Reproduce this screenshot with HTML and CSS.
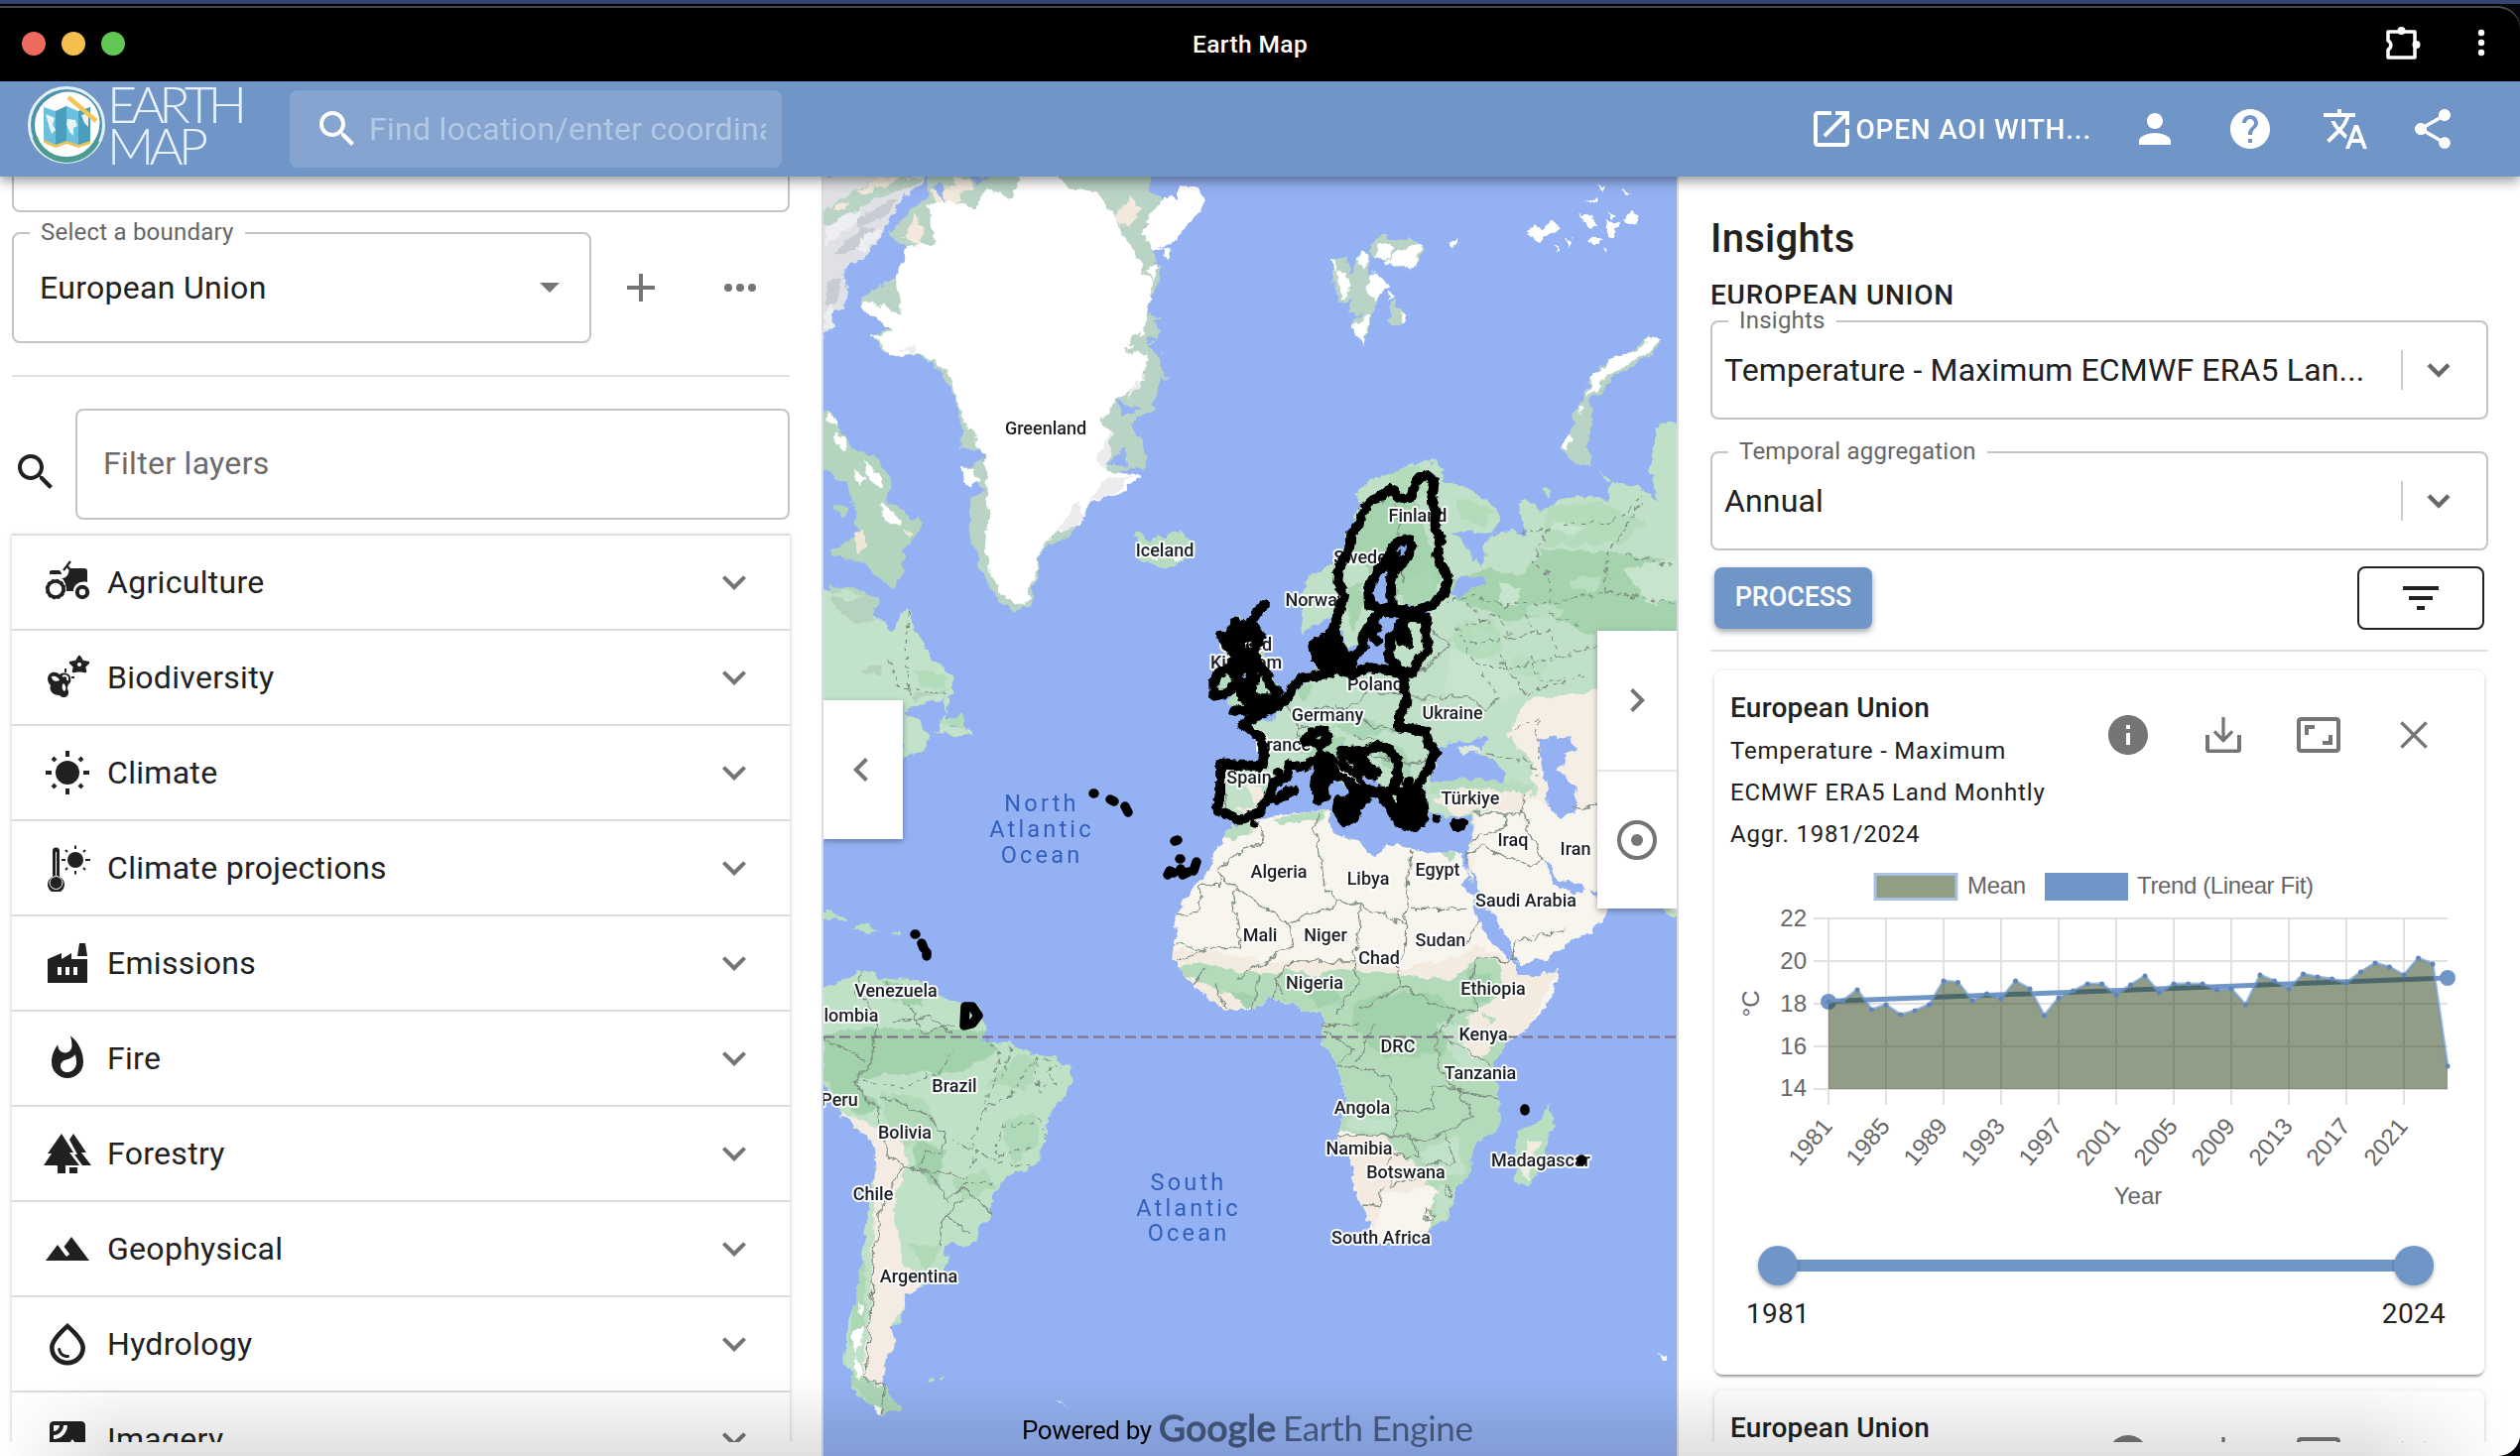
FILE: index.html
```html
<!DOCTYPE html>
<html lang="en">
<head>
<meta charset="utf-8">
<title>Earth Map</title>
<link rel="stylesheet" href="styles.css">
</head>
<body>
<svg class="defs" aria-hidden="true">
  <symbol id="search" viewBox="0 0 24 24"><path d="M15.5 14h-.79l-.28-.27C15.41 12.59 16 11.11 16 9.5 16 5.91 13.09 3 9.5 3S3 5.91 3 9.5 5.91 16 9.5 16c1.61 0 3.09-.59 4.23-1.57l.27.28v.79l5 4.99L20.49 19l-4.99-5zm-6 0C7.01 14 5 11.99 5 9.5S7.01 5 9.5 5 14 7.01 14 9.5 11.99 14 9.5 14z"/></symbol>
  <symbol id="chev" viewBox="0 0 24 24"><path d="M16.59 8.59 12 13.17 7.41 8.59 6 10l6 6 6-6z"/></symbol>
  <symbol id="info" viewBox="0 0 24 24"><path d="M12 2C6.48 2 2 6.48 2 12s4.48 10 10 10 10-4.48 10-10S17.52 2 12 2zm1 15h-2v-6h2v6zm0-8h-2V7h2v2z"/></symbol>
  <symbol id="download" viewBox="0 0 24 24"><path d="M11.200 3h1.600v9.800l3.200-3.200 1.100 1.100L12 16l-5.100-5.300L8 9.600l3.200 3.200zM3 12h2v7.200h14V12h2v7.500c0 .9-.7 1.500-1.500 1.500h-15c-.8 0-1.500-.6-1.500-1.500z"/></symbol>
  <symbol id="ratio" viewBox="0 0 24 24"><path d="M19 12h-2v3h-3v2h5v-5zM7 9h3V7H5v5h2V9zm14-6H3c-1.100 0-2 .9-2 2v14c0 1.100.9 2 2 2h18c1.100 0 2-.9 2-2V5c0-1.100-.9-2-2-2zm0 16.010H3V4.990h18v14.020z"/></symbol>
  <symbol id="close" viewBox="0 0 24 24"><path d="M5.700 5.700 18.300 18.300M18.300 5.700 5.700 18.300" fill="none" stroke="currentColor" stroke-width="1.700"/></symbol>
</svg>

<div class="window">
  <div class="titlebar">
    <div class="lights"><i class="red"></i><i class="amber"></i><i class="green"></i></div>
    <div class="wintitle">Earth Map</div>
    <div class="wintools">
      <svg width="40" height="40" viewBox="0 0 40 40"><path d="M5 8h27v26H5v-8a5 5 0 0 0 0-9z" fill="none" stroke="#fff" stroke-width="3.500" stroke-linejoin="round"/><circle cx="18.500" cy="7" r="4" fill="#fff"/><circle cx="33.500" cy="21" r="4" fill="#fff"/></svg>
      <svg width="10" height="34" viewBox="0 0 10 34" fill="#fff"><circle cx="5" cy="6" r="3.200"/><circle cx="5" cy="16" r="3.200"/><circle cx="5" cy="26" r="3.200"/></svg>
    </div>
  </div>

  <header class="appbar">
    <svg class="logo" width="230" height="96" viewBox="20 82 230 96">
      <circle cx="67" cy="126" r="37.500" fill="#fff" stroke="#e6f0fa" stroke-width="3"/>
      <circle cx="67" cy="126" r="34" fill="none" stroke="#4b93ad" stroke-width="4"/>
      <path d="M35 138A34 34 0 0 0 98 142" fill="none" stroke="#4d9a8f" stroke-width="5"/>
      <circle cx="69" cy="124" r="31.500" fill="#fff"/>
      <path d="M44 108l12 4 11-5 12 5 12-4v36l-12 3-12-4-11 4-12-5z" fill="#6cc0dd"/>
      <path d="M56 112l11-5v36l-11 4zM79 112l12-4v36l-12 3z" fill="#4a9dbd"/>
      <path d="M46 115l9 4-2 7 3 5-4 4-3-9zM68 120l8 1 2 6-4 2v8l-4-4-3-8zM82 116l7-2v14l-4-4z" fill="#e8f5f4"/>
      <path d="M44 141l12 5 11-4 12 4 12-4v3l-12 4-12-4-11 4-12-5z" fill="#eac55a"/>
      <path d="M69 98l28 24" stroke="#f4c550" stroke-width="4.500"/>
      <text class="brand" x="108" y="124" textLength="141">EARTH</text>
      <text class="brand" x="108" y="166" textLength="102">MAP</text>
    </svg>
    <div class="finder"><svg class="ic"><use href="#search"/></svg><span>Find location/enter coordinates</span></div>
    <nav class="actions">
      <div class="aoi"><svg class="ic" viewBox="0 0 24 24"><path d="M19 19H5V5h7V3H5c-1.110 0-2 .9-2 2v14c0 1.100.89 2 2 2h14c1.100 0 2-.9 2-2v-7h-2v7zM14 3v2h3.590l-9.830 9.830 1.410 1.410L19 6.410V10h2V3h-7z"/></svg><span>OPEN AOI WITH...</span></div>
      <svg class="ic person" viewBox="0 0 24 24"><path d="M12 12c2.210 0 4-1.790 4-4s-1.790-4-4-4-4 1.790-4 4 1.790 4 4 4zm0 2c-2.670 0-8 1.340-8 4v2h16v-2c0-2.660-5.330-4-8-4z"/></svg>
      <svg class="ic" viewBox="0 0 24 24"><path d="M12 2C6.480 2 2 6.480 2 12s4.480 10 10 10 10-4.480 10-10S17.520 2 12 2zm1 17h-2v-2h2v2zm2.070-7.750-.9.920C13.450 12.900 13 13.500 13 15h-2v-.5c0-1.100.45-2.100 1.170-2.830l1.240-1.260c.37-.36.59-.86.59-1.410 0-1.100-.9-2-2-2s-2 .9-2 2H8c0-2.210 1.790-4 4-4s4 1.790 4 4c0 .88-.36 1.680-.93 2.250z"/></svg>
      <svg class="ic" viewBox="0 0 24 24"><path d="M12.870 15.070l-2.540-2.510.03-.03c1.740-1.940 2.980-4.170 3.710-6.530H17V4h-7V2H8v2H1v1.990h11.170C11.500 7.920 10.440 9.750 9 11.350 8.070 10.320 7.300 9.190 6.690 8h-2c.73 1.630 1.730 3.170 2.980 4.560l-5.090 5.020L4 19l5-5 3.110 3.110.76-2.040zM18.500 10h-2L12 22h2l1.120-3h4.750L21 22h2l-4.500-12zm-2.620 7l1.620-4.330L19.120 17h-3.240z"/></svg>
      <svg class="ic share" viewBox="0 0 24 24"><path d="M18 16.080c-.76 0-1.440.3-1.960.77L8.910 12.700c.05-.23.09-.46.09-.7s-.04-.47-.09-.7l7.050-4.110c.54.5 1.250.81 2.040.81 1.660 0 3-1.340 3-3s-1.340-3-3-3-3 1.340-3 3c0 .24.04.47.09.7L8.040 9.810C7.500 9.310 6.790 9 6 9c-1.660 0-3 1.340-3 3s1.340 3 3 3c.79 0 1.500-.31 2.040-.81l7.120 4.160c-.05.21-.08.43-.08.65 0 1.610 1.310 2.920 2.920 2.920s2.920-1.310 2.920-2.920-1.310-2.920-2.920-2.920z"/></svg>
    </nav>
  </header>

  <main class="body">
    <aside class="left">
      <div class="cutbox"></div>
      <div class="boundary">
        <div class="field"><label>Select a boundary</label><span>European Union</span><i class="caret"></i></div>
        <svg class="plus" width="48" height="48" viewBox="0 0 24 24"><path d="M19 13h-6v6h-2v-6H5v-2h6V5h2v6h6v2z"/></svg>
        <svg class="dots" width="48" height="48" viewBox="0 0 24 24"><circle cx="6" cy="12" r="2"/><circle cx="12" cy="12" r="2"/><circle cx="18" cy="12" r="2"/></svg>
      </div>
      <hr>
      <div class="filter"><svg class="ic"><use href="#search"/></svg><div class="filterbox">Filter layers</div></div>
      <ul class="layers">
        <li><svg class="ic" viewBox="0 0 48 48"><circle cx="12" cy="31" r="8" fill="none" stroke="#212121" stroke-width="3.500"/><circle cx="12" cy="31" r="9.500" fill="none" stroke="#212121" stroke-width="1.500" stroke-dasharray="3 2"/><circle cx="39" cy="34" r="5.200" fill="none" stroke="#212121" stroke-width="4"/><path d="M8 12h8l2 3v1H6v-3zM26 10h15c2 0 3 1 3 3v11c-8-2-14 3-14 9h-7c0-8-3-12-5-13 4 0 7-2 8-10z"/><path d="M20 12l7-9M24 8l3 4" stroke="#212121" stroke-width="2.200"/></svg><span>Agriculture</span><svg class="ic arrow"><use href="#chev"/></svg></li>
        <li><svg class="ic" viewBox="0 0 48 48"><path d="M4 25c1-7 8-8 12-4 7-4 13 1 11 8-3 3-4 5-2 9 1 6-6 8-9 4-7 0-11-5-9-10-2-2-3-4-3-7z"/><path d="M8 23c4-1 7 1 8 4-4 2-8 0-8-4zM20 30c3 3 3 6 1 8-3-2-3-6-1-8z" fill="#fff"/><path d="M22 19v-4M28 24h3" fill="none" stroke="#212121" stroke-width="2"/><path d="M19 23c3-2 6 0 5 4" fill="none" stroke="#fff" stroke-width="2"/><path d="M36 3l3 5 6 1-4 4 1 5-6-1-6 1 1-5-4-4 6-1z" stroke="#212121" stroke-width="2.500" stroke-linejoin="round"/><circle cx="36" cy="11" r="2" fill="#fff"/></svg><span>Biodiversity</span><svg class="ic arrow"><use href="#chev"/></svg></li>
        <li><svg class="ic" viewBox="0 0 48 48"><circle cx="24" cy="24" r="12"/><path d="M24 2v6M24 40v6M2 24h6M40 24h6M9 9l3 3M36 36l3 3M9 39l3-3M36 12l3-3" stroke="#212121" stroke-width="4"/></svg><span>Climate</span><svg class="ic arrow"><use href="#chev"/></svg></li>
        <li><svg class="ic" viewBox="0 0 48 48"><path d="M9 33V7a3.500 3.500 0 0 1 7 0v26a8.500 8.500 0 1 1-7 0z"/><circle cx="12.500" cy="39" r="6.500" fill="none" stroke="#fff" stroke-width="1"/><path d="M12.500 8v24" stroke="#fff" stroke-width="1"/><circle cx="32" cy="16" r="8"/><path d="M32 1.500v3.500M32 27v3.500M18 16h4M42 16h5M22 6l2 2M40 24l2 2M22 26l2-2M40 8l2-2" stroke="#212121" stroke-width="2"/></svg><span>Climate projections</span><svg class="ic arrow"><use href="#chev"/></svg></li>
        <li><svg class="ic" viewBox="0 0 48 48"><path fill-rule="evenodd" d="M4 20l14-6v6l10-6v6h16v24H4zM14 28v8h4v-8zM22 28v8h4v-8zM30 28v8h4v-8zM36 4h6l2 13H34z"/></svg><span>Emissions</span><svg class="ic arrow"><use href="#chev"/></svg></li>
        <li><svg class="ic" viewBox="0 0 24 24"><path d="M13.500.67s.74 2.650.74 4.800c0 2.060-1.350 3.730-3.410 3.730-2.070 0-3.630-1.670-3.630-3.730l.03-.36C5.210 7.510 4 10.620 4 14c0 4.420 3.580 8 8 8s8-3.580 8-8C20 8.610 17.410 3.800 13.500.67zM11.710 19c-1.780 0-3.220-1.400-3.220-3.140 0-1.620 1.050-2.760 2.810-3.120 1.770-.36 3.600-1.210 4.620-2.580.39 1.290.59 2.650.59 4.040 0 2.650-2.150 4.800-4.800 4.800z"/></svg><span>Fire</span><svg class="ic arrow"><use href="#chev"/></svg></li>
        <li><svg class="ic" viewBox="0 0 48 48"><path d="M18 4l12 19h-4l10 13H22v8h-8v-8H0l8-12H4zM26 10l4-6 13 19h-5l10 13h-9l-8-11h3zM26 38h8v6h-8z"/></svg><span>Forestry</span><svg class="ic arrow"><use href="#chev"/></svg></li>
        <li><svg class="ic" viewBox="0 0 24 24"><path d="M14 6l-3.750 5 2.850 3.800-1.600 1.200C9.810 13.750 7 10 7 10l-6 8h22L14 6z"/></svg><span>Geophysical</span><svg class="ic arrow"><use href="#chev"/></svg></li>
        <li><svg class="ic" viewBox="0 0 24 24"><path d="M12 1.500c-5.330 4.550-9 8.980-9 12.300 0 5.480 4.300 9 9 9s9-3.520 9-9c0-3.320-3.670-7.750-9-12.300zm0 18.900c-3.350 0-6.700-2.570-6.700-6.600 0-2.340 2.650-5.440 6.700-9.340 4.050 3.900 6.700 6.990 6.700 9.340 0 4.030-3.350 6.600-6.700 6.600zm-4.170-6.400c.37 0 .67.26.74.62.41 2.220 2.280 2.980 3.640 2.870.43-.02.79.32.79.75 0 .4-.32.73-.72.75-2.130.13-4.620-1.090-5.190-4.120-.08-.45.28-.87.740-.87z"/></svg><span>Hydrology</span><svg class="ic arrow"><use href="#chev"/></svg></li>
        <li><svg class="ic" viewBox="0 0 24 24"><path d="M19 3H5c-1.100 0-2 .9-2 2v14c0 1.100.9 2 2 2h14c1.100 0 2-.9 2-2V5c0-1.100-.9-2-2-2zM5 4.990h3C8 6.650 6.660 8 5 8V4.990zM5 12v-2c2.760 0 5-2.250 5-5.010h2C12 8.860 8.870 12 5 12zm0 6 3.500-4.500 2.500 3.010L14.500 12l4.500 6H5z"/></svg><span>Imagery</span><svg class="ic arrow"><use href="#chev"/></svg></li>
      </ul>
    </aside>

    <section class="map">
      <svg class="world" width="860" height="1290" viewBox="830 178 860 1290">
        <defs>
          <!-- roughens coastlines -->
          <filter id="coast" filterUnits="userSpaceOnUse" x="820" y="170" width="880" height="1300"><feTurbulence type="fractalNoise" baseFrequency=".09" numOctaves="3" seed="4"/><feDisplacementMap in="SourceGraphic" scale="11" xChannelSelector="R" yChannelSelector="G"/></filter>
          <filter id="rough" filterUnits="userSpaceOnUse" x="1180" y="450" width="330" height="420"><feTurbulence type="fractalNoise" baseFrequency=".16" numOctaves="2" seed="9"/><feDisplacementMap in="SourceGraphic" scale="6" xChannelSelector="R" yChannelSelector="G"/></filter>
          <path id="africa" d="M760 690L800 675 840 665 900 655 932 655 925 690 940 720 980 745 1000 780 1015 795 1030 755 1080 765 1110 780 1150 775 1172 795 1180 835 1172 870 1190 930 1200 990 1220 1040 1262 1110 1270 1150 1310 1148 1348 1137 1340 1200 1315 1260 1290 1310 1255 1345 1228 1420 1240 1520 1240 1605 1190 1670 1185 1760 1160 1790 1150 1880 1110 1925 1050 1965 1010 1960 995 1870 975 1800 970 1710 942 1635 960 1530 945 1420 915 1360 920 1280 910 1262 885 1262 860 1235 820 1225 780 1255 740 1258 710 1220 680 1180 650 1120 640 1080 652 1020 645 970 665 920 700 850 720 780 740 720z"/>
          <path id="samerica" d="M-10 1190L45 1160 80 1130 110 1160 180 1165 230 1220 290 1250 303 1310 290 1350 345 1355 380 1385 430 1400 458 1430 460 1475 415 1570 410 1660 390 1730 350 1750 320 1800 305 1880 270 1970 225 1965 232 2010 220 2050 175 2105 150 2110 155 2140 145 2200 125 2220 140 2250 120 2310 110 2390 145 2460 105 2475 65 2420 42 2310 45 2220 65 2110 80 1960 85 1840 100 1740 95 1650 35 1570 5 1480 -10 1460z"/>
          <path id="eurasia" d="M880 110L875 0 895 -60 950 -110 965 -210 990 -280 975 -310 1010 -350 1045 -370 1080 -400 1090 -390 1105 -415 1140 -380 1130 -350 1160 -335 1220 -290 1245 -230 1230 -185 1190 -190 1155 -195 1180 -145 1190 -100 1215 -120 1212 -160 1250 -200 1290 -180 1275 -280 1300 -280 1310 -250 1350 -290 1380 -300 1440 -290 1445 -345 1500 -320 1530 -280 1515 -390 1530 -510 1580 -530 1580 970 1535 940 1425 900 1390 880 1350 860 1320 795 1340 880 1390 905 1400 880 1435 950 1410 1010 1370 1050 1330 1100 1270 1120 1240 1030 1220 960 1180 840 1190 720 1190 668 1150 672 1110 655 1100 580 1095 620 1070 690 1040 640 1030 590 1000 540 950 450 945 480 990 590 985 620 925 530 905 500 860 520 850 550 815 610 800 670 760 685 725 660 725 510 800 515 810 440 770 385 830 370 850 310 900 240 905 130 945 150 945 240 1060 230 1040 180 1060 60 1110 55 1130 20 1050 35 1040 -10 1055 -80 1085 -150 1050 -180 1035 -110 1000 -60 995 0 1010 60 985 150 962 160 945 100 930 60z"/>
          <clipPath id="ca"><use href="#africa"/></clipPath>
          <clipPath id="cs"><use href="#samerica"/></clipPath>
          <clipPath id="ce"><use href="#eurasia"/></clipPath>
        </defs>
        <rect x="830" y="178" width="860" height="1290" fill="#94b2f3"/>

        <g filter="url(#coast)">
        <g transform="translate(828 170) scale(.55102 .33333)">
          <path fill="#dfe1e6" d="M-10 20L190 20 165 75 150 80 130 140 110 200 80 270 40 300 50 350 40 425 18 430 15 480 -10 545z"/>
          <path fill="#b9d3c4" d="M-10 140L60 70 110 24 185 24 160 60 110 85 60 130 10 170z"/>
          <path fill="#f2e8dc" d="M60 75L110 24 140 30 90 70zM20 120l30-20-10 30z"/>
          <path fill="#c9cbd2" d="M20 260l60-90 15 10-20 60-40 20zM10 340l30-20-10 90-20 10zM60 150l80-60-20 50-50 40z"/>
          <path fill="#eceef2" d="M5 180l40-40 30-20-20 50-50 70zM60 240l40-60 10 10-30 60zM5 440l20-30-5 60-15 20z"/>
          <path fill="#b9d3c4" d="M125 200L160 125 195 90 195 14 605 14 600 70 625 90 590 170 610 270 620 330 600 400 598 440 625 500 600 540 625 600 612 690 600 740 560 770 590 840 590 900 540 915 490 1020 450 1120 405 1150 380 1320 350 1340 320 1300 290 1200 270 1100 275 1000 300 970 262 930 265 900 300 880 290 850 250 850 260 790 235 660 218 610 180 565 125 570 90 510 140 470 70 410 80 380 140 330 155 245z"/>
          <path fill="#f2e8dc" d="M200 70l40-20 20 50-50 20zM150 200l20-60 20 40-10 60zM535 150l30-60 20 30-20 60zM240 28h30l10 30-30 30z"/>
          <path fill="#fff" d="M195 110L225 95 280 120 300 60 350 90 360 14 430 14 450 60 500 70 540 140 550 200 570 240 590 320 608 330 600 400 595 460 580 520 555 550 595 560 590 640 540 700 510 760 530 800 520 870 530 920 585 925 545 985 490 1015 470 1080 430 1095 405 1140 390 1230 375 1315 350 1318 320 1270 305 1200 300 1130 305 1050 300 960 300 870 275 800 245 700 240 640 220 600 180 560 125 570 112 530 90 510 130 490 105 460 75 420 80 400 145 440 140 340 155 240 210 225z"/>
          <path fill="#fff" d="M600 140L630 85 648 100 655 52 690 55 702 90 690 140 660 190 650 220 610 250 585 200zM625 240l15 5-5 25-12-5zM590 300l25-10-5 40z"/>
          <path fill="#ececef" d="M490 1010l20-60 60-20-40 60zM500 890l30-100-5 120zM430 1090l40-80 10 40-20 40zM560 690l20-60 10 30zM145 550l30-20-5 30z"/>
          <path fill="#94b2f3" d="M205 60l25 40-15-60zM540 700l50 30-40 20zM525 890l30-50 5 60zM595 500l20 20-18 10zM270 24l15 20 20-20z"/>
          <path fill="#b9d3c4" d="M580 720l20-25 12 30-15 25zM545 790l40 30 10 85-20-20zM560 530l20-40 5 50zM600 430l22 30-20-6zM622 540l5 35-6-20zM620 600l18 40-14-4z"/>
          <path fill="#b3d4bd" d="M-10 735L20 740 35 790 60 850 90 865 118 905 128 965 118 1000 155 1040 182 1075 165 1130 145 1155 152 1230 135 1272 100 1230 70 1190 20 1175 20 1150 70 1110 60 1040 50 960 -10 885zM25 1015l20 10-5 30-15-10zM15 1255l50 15 40 40-10 15-80 5z"/>
          <path fill="#fff" d="M10 735l15 20 5 20-22-10zM25 800l20 20-5 30-15-20zM55 905l25 30-10 25zM110 1010l30 50 5 25-35-30zM75 880l30 50 10 40-30-30zM255 900l20 5 15 40-20 20z"/>
          <path fill="#f0e6d8" d="M60 1100l18-10v60l-15 20zM148 1090l20 10-5 20z"/>
          <path fill="#b7dcc0" d="M578 1100L600 1130 612 1105 625 1115 655 1095 672 1115 685 1150 665 1185 630 1215 600 1200 575 1165z"/>
          <path fill="#fff" d="M630 1175l25-10 8 15-20 12zM600 1170l18-6v18z"/>
          <path fill="#b9d3c4" d="M935 270l25-5 5 55 25-70 15 10-5 60 35 35-20 50-10 40-40-5 10-40-30 5-10-70zM1005 220l25-18 20 20 20-15 35 30-20 60-30 10-50-55zM1045 400l25 50-10 25-25-10zM975 450l35-15-18 95-18-40z"/>
          <path fill="#fff" d="M945 310l15 10 5 70-15 5zM1010 310l30 45-25 40-20-35zM985 245l15 20-5 40-12-10zM1020 225l28 20-15 30-18-15zM1060 240l40-10-20 80-50-25zM970 480l35-40-14 90zM1040 370l8 20-10 12zM1148 222l15-8v18l-12 6zM935 265l8 10-2 50zM1058 440l12 10-6 25z"/>
          <path fill="#fff" d="M1290 190l15-25 10 20 20-25 15 20-20 25-20 20-15-20zM1420 45l10 5-5 20zM1465 60l14 10-8 8zM1385 130l15 5 20 40-15 5zM1435 160l25 5-10 40-15-10zM1470 160l15-35 10 20-10 25zM1400 220l15-20 15 10-10 20zM1395 110l20-25 5 10zM1340 235l10 10-5 8zM1362 215l12 8-6 8zM1430 240l8 5-4 5zM1440 135l12 5-8 10z"/>
          <path fill="#b9d3c4" d="M1515 505L1532 520 1525 550 1490 590 1450 620 1425 680 1405 700 1410 760 1400 840 1412 895 1380 895 1352 845 1370 790 1385 720 1405 640 1430 590 1480 555z"/>
          <path fill="#fff" d="M1515 508L1530 520 1520 548 1480 585 1440 620 1420 670 1400 690 1410 630 1435 590 1490 550zM1385 720l12-10-6 35zM1355 840l10-40 8 20-5 30z"/>
          <path fill="#b9dfc1" d="M1325 960l14 10-8 22-12-15zM1425 915l18 25-8 5z"/>
        </g>

        <g transform="translate(828 600) scale(.55102 .33333)">
          <path fill="#c3e2ca" d="M-10 -30L20 0 40 -25 70 0 100 60 130 110 155 40 165 90 185 150 205 200 240 250 242 300 220 320 235 400 265 395 275 425 210 420 225 370 235 310 150 345 200 430 195 460 150 495 140 340 -10 330 -10 200z"/>
          <path fill="#b5d2bf" d="M20 10l70 5 10 60-30 10-40-30zM80 215l30-5v30l-35-5zM160 300l70-10-60 30z"/>
          <path fill="#b2dcb9" d="M170 220l50 20 10 50-50-20zM215 390l40-30 10 40z"/>
          <path fill="#b8dfc0" d="M5 945l20 20 25 20-10 6-35-20zM55 1010l20-18 35 22-20 5zM125 1018h18v6h-15z"/>

          <use href="#eurasia" fill="#c0e1c7"/>
          <g clip-path="url(#ce)">
            <path fill="#a4d3ad" d="M1140 -20L1210 -80 1280 -60 1320 -140 1440 -130 1580 -100 1580 110 1400 120 1330 60 1260 80 1180 30zM950 -150l60-140 70-30 40 200 20 50-20 60-70 10zM960 -20l30-20v100l-20 50z"/>
            <path fill="#b4dcbb" d="M1030 -380l70-10 20 80-60 30zM1160 -300l70 40-20 50-40-20zM1330 -270l100-10 80 60-40 60-150 10zM1170 70l60 10 20 90-60 30-40-60z"/>
            <path fill="#c6e5cc" d="M1340 -230l60 30-30 20-40-20zM1470 -80l110-40v130l-70 20zM1240 -40l40 20-10 60-30-20zM1150 160l80 40 60 90-90 60-60-60z"/>
            <path fill="#b8dec0" d="M1380 -60l50 10-20 40-40-10zM1300 20l60 20-20 30-50-10zM1190 100l40 10-10 60-30-20zM1270 180l60 20-20 60-50-30z"/>
            <path fill="#a9d6b2" d="M930 400l60-30 60 40-60 20zM870 480l30-60 60 10-10 50zM850 250l50 20-20 50zM1010 430l60 40 10 80-50-30zM1060 -40l50-40 20 90-60 40z"/>
            <path fill="#f5eee5" d="M1290 320L1420 290 1580 300 1580 1200 1160 1200 1185 780 1195 660 1280 620 1310 600 1300 560 1300 510 1255 420z"/>
            <path fill="#f8f5ee" d="M1200 670L1290 600 1330 640 1420 640V1120H1180z"/>
            <path fill="#f3ebe0" d="M1120 615l40-30 100-10 40 20-20 60-60-10-60 25z"/>
            <path fill="#f3ebe0" d="M775 580l30-5 10 40-25 20zM750 650l60-15-10 30z"/>
            <path fill="#b6dcbd" d="M1110 570L1180 545 1250 560 1300 580 1290 600 1180 585 1115 600z"/>
          </g>
          <path fill="#94b2f3" d="M1118 545L1125 470 1150 440 1185 445 1215 422 1222 440 1200 470 1240 510 1252 535 1248 568 1180 552 1110 568zM1310 440l30-12 30 5 15 35-20 10-5 35-15 20 30 40 8 60-3 30-30 5-20-30-5-60zM1148 -10l20-40 40-5 10 20-30 15-20 30zM1200 -150l15 40-5 20-15-25zM1175 800l20 50 30 110 30 80 20 80-15-10-40-90-25-110-10-100z"/>
          <path fill="#dceadb" d="M1160 465l30-12 25 10-30 15-15 12z"/>

          <use href="#africa" fill="#f8f5ee"/>
          <g clip-path="url(#ca)">
            <path fill="#f3ebe0" d="M640 1070L720 1080 830 1110 960 1105 1060 1130 1170 1090 1200 1060 1280 1120 1348 1130 1290 1320 940 1400 640 1250z"/>
            <path fill="#b3dbb9" d="M640 1130L700 1115 780 1145 830 1150 860 1130 900 1150 960 1130 1060 1150 1150 1165 1190 1120 1200 1090 1240 1110 1250 1190 1220 1240 1180 1270 1190 1320 1260 1330 1260 1980 1120 1980 1110 1870 1130 1800 1080 1760 1040 1690 1000 1640 930 1600 870 1300z"/>
            <path fill="#a2d2ab" d="M970 1240l60-40 100 10 30 50-20 130-110 10-60-90zM740 1200l60 10-20 40zM1180 1130l50 20-10 80-30 10zM880 1190l50-20 20 60-40 20z"/>
            <path fill="#c1e2c8" d="M1130 1290l60 20 30 120-50 20zM970 1570l80 20-10 40-80-20zM1090 1680l70-40 20 100-60 20zM1130 1780l30 20-20 110-20-20z"/>
            <path fill="#f3ebe0" d="M1170 1350l40-20 30-40-20 100-30 10zM940 1640l80-10 40 60 50 60-20 50-60 10-20 120z"/>
            <path fill="#b8dcbe" d="M830 675l100-30-10 30-80 15zM725 730l40-45 30 10-40 50zM1125 775l40-8-10 35zM1210 1270l20 10-10 20z"/>
          </g>

          <use href="#samerica" fill="#bfe1c6"/>
          <g clip-path="url(#cs)">
            <path fill="#a2d2ab" d="M5 1330L100 1310 300 1320 320 1380 260 1440 220 1450 180 1440 60 1470 110 1560 60 1570 5 1470zM110 1170l60 10 20 60-60-10zM170 1640l60 40-20 110-40-60z"/>
            <path fill="#b0d9b8" d="M110 1500l80 30 20 100-50 40-40-60zM300 1480l60-90 40 10-20 100zM240 1770l60-30 20 50-60 40zM160 1960l60 10-30 80zM330 1600l60-40 10 100-50 60z"/>
            <path fill="#f4ece2" d="M20 1560L60 1580 105 1610 150 1660 155 1740 130 1850 140 1940 150 2030 190 2060 175 2110 150 2110 155 2140 125 2220 140 2250 112 2400 75 2360 85 2230 92 2000 100 1760 92 1650z"/>
            <path fill="#aed7b6" d="M45 2350l70 50 40 80-60 0zM60 2100l20-100v230l-30 40z"/>
            <path fill="#fff" d="M58 2225l20-20-4 60-15 30zM60 2300l12 20v60l-12-20zM85 2450l25 15v15zM68 2130l8 20-2 40-6-20z"/>
          </g>
          <path fill="#b9dfc1" d="M1330 1545L1340 1590 1330 1670 1315 1740 1290 1790 1270 1770 1270 1700 1275 1620 1310 1600zM195 2368l10-4v16h-12zM212 2364h10l-6 12z"/>
          <path fill="#f3ebe0" d="M1290 1640l25 10-20 90-10-20zM1280 1735l20 0-10 40z"/>
          <path fill="#fff" d="M430 2438l10 4 10 18zM1532 2298l6 6 8-4-3 16h-8z"/>
          <path fill="#c6e2c5" d="M1535 948h29v30z"/>

          <g class="border">
            <path d="M800 680L810 755 770 765 730 825V880H695L685 965H645M730 855L855 992 945 930 920 880 910 740 900 710 908 660M752 895L765 1065 700 1070 650 1110M752 895H768M855 992L865 1060 830 1090 760 1160M945 930L975 930 1068 995 1078 770M1078 952H1180M985 940L975 1110 860 1110 830 1165 850 1220M1068 995V1060L1055 1130 1060 1180 980 1260M1060 1180L1130 1250 1200 1260 1190 1170 1200 1090 1270 1110M650 1050L700 1080M680 1180L700 1130M740 1250L720 1170M790 1250L800 1150M830 1230V1160M970 1110L985 1170 940 1260"/>
            <path d="M915 1300H985M920 1320L970 1370 945 1420 1000 1435 1045 1465 1050 1560 1115 1555 1120 1480 1170 1500 1240 1520M1050 1560V1640L1100 1650 1160 1610 1190 1570 1165 1500 1130 1440 1120 1330 1160 1270M942 1635H1080L1090 1700 1040 1690V1790L1090 1760 1130 1710 1160 1720M1025 1790V1850L990 1845M1140 1335L1225 1420M1160 1720L1140 1620M1010 1300L980 1410"/>
            <path d="M1105 1860l15 10-5 20-12-4zM1145 1790l10 10-6 18-10-8z"/>
            <path d="M1195 660H1280L1290 600M1280 650L1300 740 1320 800M1190 740L1250 700 1250 660M1180 790L1210 760 1300 825 1320 800M1360 1010L1270 1050 1265 1110M1180 780V810M1370 650L1420 630M1200 990L1180 1060"/>
            <path d="M850 320L870 400 930 410M900 340L960 350 1000 290 1060 300M940 330L1010 400 1070 410M970 420L1010 440M1070 310L1180 305 1220 350 1240 310M1090 240L1150 150 1110 100M985 480L1040 500M1060 510L1110 500M740 560V650M1065 -40L1050 -270M870 400L880 470"/>
            <path d="M75 1135L60 1200 90 1250 100 1310M120 1180L170 1260 180 1330 240 1300M100 1310L90 1420 60 1470 100 1560 120 1690 150 1730 200 1750 230 1830 260 1790 310 1870M180 1730L190 1680 220 1690 225 1630 190 1570 110 1510M160 1730L260 1760M150 1730L110 1850 95 2000 85 2300 80 2370 112 2390V2470M260 1820L220 1900 220 1970M230 1880L270 1930M5 1340L80 1410M130 1290L200 1270 240 1330"/>
          </g>
          <g class="border dash">
            <path d="M60 1470L150 1490 220 1440 240 1370M300 1340L330 1400 300 1550 270 1680 240 1640M330 1460L345 1370M345 1510L300 1560M345 1510L390 1400 440 1430M390 1480L440 1480M390 1410L400 1510M330 1610L400 1590 410 1640M280 1680L330 1720 390 1730M280 1700L260 1780 320 1780M330 1600L320 1700 380 1680M410 1400L430 1500"/>
            <path d="M155 50V200L160 300M125 200L140 280 230 300"/>
            <path d="M1140 20L1200 0 1250 30 1330 20 1330 -60 1300 -100 1330 -200 1280 -190M1355 -218H1450L1500 -300M1435 -10L1440 -130 1500 -280M1340 20L1440 -10 1564 30M1470 -120L1564 -90M1160 100L1240 60 1260 130 1180 150zM1260 130L1330 110 1350 190 1250 220 1240 180M1350 190L1420 150M1250 220L1290 300 1400 240M1180 30L1220 90M1290 60L1310 120M1330 60L1390 90M1180 160L1200 220 1250 220M1300 180L1310 260 1360 250M1270 400L1310 370 1310 500M1220 480L1290 500 1310 540M1210 240L1240 300"/>
          </g>
        </g>
        <path fill="#b5dcbd" d="M1234 645l16-22 18 20 8 22 8 20 6 12-4 10-40 8-8-6 10-20-8-14zM1223 680l20-5 2 20-20 8z"/>
        </g>
        <path d="M830 1045.500H1690" class="equator"/>

        <g class="names">
          <text x="1054" y="438">Greenland</text><text x="1429" y="526">Finland</text><text x="1376" y="568">Sweden</text><text x="1326" y="611">Norway</text><text x="1174" y="561">Iceland</text>
          <text x="1256" y="656">United</text><text x="1256" y="674">Kingdom</text><text x="1386" y="696">Poland</text><text x="1338" y="727">Germany</text><text x="1464" y="725">Ukraine</text><text x="1294" y="757">France</text><text x="1259" y="790">Spain</text><text x="1351" y="778">Italy</text>
          <text x="1482" y="811">Türkiye</text><text x="1525" y="853">Iraq</text><text x="1588" y="862">Iran</text><text x="1289" y="885">Algeria</text><text x="1379" y="892">Libya</text><text x="1449" y="883">Egypt</text><text x="1538" y="914">Saudi Arabia</text>
          <text x="1270" y="949">Mali</text><text x="1336" y="949">Niger</text><text x="1452" y="954">Sudan</text><text x="1390" y="972">Chad</text><text x="1325" y="997">Nigeria</text><text x="1505" y="1003">Ethiopia</text><text x="903" y="1005">Venezuela</text><text x="847" y="1030">Colombia</text>
          <text x="1495" y="1049">Kenya</text><text x="1409" y="1061">DRC</text><text x="1492" y="1088">Tanzania</text><text x="962" y="1101">Brazil</text><text x="846" y="1115">Peru</text><text x="912" y="1148">Bolivia</text><text x="1373" y="1123">Angola</text><text x="1370" y="1164">Namibia</text><text x="1417" y="1188">Botswana</text><text x="1553" y="1176">Madagascar</text><text x="880" y="1210">Chile</text><text x="1392" y="1254">South Africa</text><text x="926" y="1293">Argentina</text>
        </g>
        <g class="oceans">
          <text x="1050" y="818">North</text><text x="1050" y="844">Atlantic</text><text x="1050" y="870">Ocean</text>
          <text x="1198" y="1200">South</text><text x="1198" y="1226">Atlantic</text><text x="1198" y="1251">Ocean</text>
        </g>

        <!-- boundary of the selected region -->
        <g filter="url(#rough)">
        <g transform="translate(1180 450) scale(.33333)">
          <g class="eu">
            <path d="M490 555L510 500 525 450 505 410 510 360 540 310 545 265 570 235 580 200 605 165 640 150 665 128 690 155 725 155 745 100 775 88 798 105 790 155 800 200 800 250 815 275 805 330 830 380 838 405 825 445 790 480 745 495 710 505 660 490 600 480 597 430 625 375 660 350 665 310 690 285 720 283 730 300 715 340 675 380 665 400 668 480"/>
            <path d="M640 490L600 540 580 580 585 610 545 640 550 660M625 550L605 570 625 590M690 540L720 515 775 520 770 560 780 620 750 640 730 690 700 680 660 640 665 580 700 540"/>
            <path d="M490 560L440 600 445 640 480 680 520 640 500 590 480 600 500 660 550 690 600 670 650 675 700 690 710 740 712 775 690 820 690 850 770 860 780 900 800 925 775 985 730 1050 740 1080"/>
            <path d="M480 690L400 700 370 730 350 765 310 790 215 840 270 880 285 920 275 965 200 965 150 960 150 1000 150 1050 140 1100 210 1130 265 1110 290 1070 310 1020 350 1000 360 965 400 970 450 945 490 980 530 1010 590 1060"/>
            <path d="M515 920L560 930 630 905 655 915 685 945 688 1010 670 1040 640 1050M520 920L520 960 560 990 575 1030 630 1050"/>
            <path d="M405 890L430 865 465 860 475 885 450 905 425 890 405 890"/>
            <path d="M150 680L130 710 130 755 175 745 200 710 190 670 150 680M255 650L290 690 300 720 325 745 300 790 190 800M260 700L240 740 250 770M255 640L190 660"/>
            <path d="M285 480L262 500 245 530 225 560M195 530L215 560 265 580 250 610 180 610M150 572L180 580"/>
            <path d="M320 1070L370 1040M335 1055L350 1045M720 1010L705 1060M612 985L620 990"/>
          </g>
          <path class="blob" d="M190 545l60-10 25 40-20 45 10 40-50 60-35-40 10-50-30-40zM440 585l60-20 20 50 30 45-20 25-80-20zM520 920l50-5 15 40 40 30-10 15-40-25-5 30-50-60zM690 535l25 20 5 45-25-10-10-20zM440 990l25 0 5 70-25 15-10-40zM505 1070l60-10 0 60-40 20-25-40zM660 1040l100 10 10 75-30 30-50-10-50-80zM640 1040l50 70 10-60zM855 1142l30-5-8 14-16 4zM430 600l30 0-5 50-20-10zM565 1030l40 20-50 60-20-40zM640 490l70 3-20 14-40-4zM650 340l60-20-40 60zM210 710l40-20-10 90-30-20zM240 760l80 0-30 30-60 10zM450 930l40 10 10 40-40 60-20-40z"/>
          <path fill="#94b2f3" d="M212 692l18-8-8 18zM700 303l14-4-6 26-18 8z"/>
          <path fill="#fff" d="M220 595l8-6 2 18zM238 592l6 0-2 20zM500 962l30 28-10-4zM525 935l30 40-8-6zM530 985l45 40-14-8z"/>
          <circle cx="325" cy="984" r="13"/><circle cx="252" cy="1142" r="12"/><circle cx="803" cy="1127" r="12"/>
        </g>
        </g>
        <g class="isle">
          <path d="M1102 800h1M1119 806l4 2M1134 813l3 6M1184 848l3-1M1189 866h1M1177 882l2-4 4 2M1190 876l2 6 6-3M1203 878l3-9M922 942h1M929 951l2 5M934 960v4M1537 1118v2M1594 1169v2"/>
          <path d="M973 1015l7 0 6 9-6 8-8 2z"/>
        </g>
      </svg>
      <button class="tab tab-left"><svg width="48" height="48" viewBox="0 0 24 24"><path d="M15.410 7.410 14 6l-6 6 6 6 1.410-1.410L10.830 12z"/></svg></button>
      <div class="tabs-right">
        <button class="tab"><svg width="48" height="48" viewBox="0 0 24 24"><path d="M10 6 8.590 7.410 13.170 12l-4.580 4.590L10 18l6-6z"/></svg></button>
        <button class="tab"><svg width="48" height="48" viewBox="0 0 48 48"><circle cx="24" cy="24" r="18" fill="none" stroke="#757575" stroke-width="4"/><circle cx="24" cy="24" r="6"/></svg></button>
      </div>
      <svg class="powered" width="480" height="60" viewBox="1020 1410 480 60"><text class="pw" x="1030" y="1451" textLength="131">Powered by</text><text class="goog" x="1168" y="1453" textLength="118">Google</text><text class="ee" x="1293" y="1453" textLength="192">Earth Engine</text></svg>
    </section>

    <aside class="right">
      <h1>Insights</h1>
      <h2>EUROPEAN UNION</h2>
      <div class="field sel"><label>Insights</label><span>Temperature - Maximum ECMWF ERA5 Lan...</span><i class="bar"></i><svg class="rs"><use href="#chev"/></svg></div>
      <div class="field sel second"><label>Temporal aggregation</label><span>Annual</span><i class="bar"></i><svg class="rs"><use href="#chev"/></svg></div>
      <div class="buttons"><button class="process">PROCESS</button><button class="sort"><svg width="48" height="48" viewBox="0 0 24 24"><path d="M10 18h4v-2h-4v2zM3 6v2h18V6H3zm3 7h12v-2H6v2z"/></svg></button></div>
      <hr>
      <article class="card">
        <div class="cardhead">
          <div class="cardtext"><h3>European Union</h3><p>Temperature - Maximum<br>ECMWF ERA5 Land Monhtly<br>Aggr. 1981/2024</p></div>
          <div class="cardicons"><svg class="ic"><use href="#info"/></svg><svg class="ic"><use href="#download"/></svg><svg class="ic"><use href="#ratio"/></svg><svg class="ic"><use href="#close"/></svg></div>
        </div>
        <svg class="chart" width="776" height="370" viewBox="1728 864 776 370">
          <defs><marker id="dot" markerUnits="userSpaceOnUse" markerWidth="6" markerHeight="6" refX="3" refY="3"><circle cx="3" cy="3" r="2.500" fill="#5f86b8"/></marker></defs>
          <rect x="1890" y="881.500" width="82" height="25" fill="#929d85" stroke="#a9c0e0" stroke-width="3"/>
          <rect x="2061" y="880" width="84" height="28" fill="#7096c8"/>
          <text x="1983" y="901" textLength="59">Mean</text><text x="2154" y="901" textLength="178">Trend (Linear Fit)</text>
          <path class="grid" d="M1828 926H2467M1828 969H2467M1828 1012H2467M1828 1055H2467M1828 1098H2467M1843 926V1114M1901 926V1114M1959 926V1114M2017 926V1114M2075 926V1114M2133 926V1114M2191 926V1114M2249 926V1114M2307 926V1114M2365 926V1114M2423 926V1114"/>
          <path d="M1843 1009.500L2467 986" stroke="#7096c8" stroke-width="5"/>
          <circle cx="1843" cy="1010" r="8" fill="#7096c8"/><circle cx="2467" cy="986" r="8" fill="#7096c8"/>
          <path fill="#253b0f" fill-opacity=".5" d="M1843 1098L1843 1010 1857.500 1009 1872 998 1886.500 1018 1901 1013 1915.500 1023 1930 1019 1944.500 1013 1959 989 1973.500 990.500 1988 1009 2002.500 1002 2017 1007 2031.500 989 2046 997 2060.500 1024 2075 1006 2089.500 999 2104 992 2118.500 992 2133 1003 2147.500 993 2162 984 2176.500 1001 2191 992 2205.500 992 2220 992 2234.500 998 2249 997 2263.500 1013 2278 983 2292.500 989 2307 997 2321.500 982 2336 985 2350.500 987 2365 991 2379.500 980 2394 971 2408.500 975 2423 983 2437.500 966 2452 972 2467 1075V1098z"/>
          <polyline class="meanline" points="1843,1010 1857.500,1009 1872,998 1886.500,1018 1901,1013 1915.500,1023 1930,1019 1944.500,1013 1959,989 1973.500,990.500 1988,1009 2002.500,1002 2017,1007 2031.500,989 2046,997 2060.500,1024 2075,1006 2089.500,999 2104,992 2118.500,992 2133,1003 2147.500,993 2162,984 2176.500,1001 2191,992 2205.500,992 2220,992 2234.500,998 2249,997 2263.500,1013 2278,983 2292.500,989 2307,997 2321.500,982 2336,985 2350.500,987 2365,991 2379.500,980 2394,971 2408.500,975 2423,983 2437.500,966 2452,972 2467,1075"/>
          <g text-anchor="end"><text x="1821" y="934">22</text><text x="1821" y="977">20</text><text x="1821" y="1020">18</text><text x="1821" y="1063">16</text><text x="1821" y="1105">14</text></g>
          <g text-anchor="end">
            <text transform="translate(1848 1136) rotate(-50)">1981</text><text transform="translate(1906 1136) rotate(-50)">1985</text><text transform="translate(1964 1136) rotate(-50)">1989</text><text transform="translate(2022 1136) rotate(-50)">1993</text><text transform="translate(2080 1136) rotate(-50)">1997</text><text transform="translate(2138 1136) rotate(-50)">2001</text><text transform="translate(2196 1136) rotate(-50)">2005</text><text transform="translate(2254 1136) rotate(-50)">2009</text><text transform="translate(2312 1136) rotate(-50)">2013</text><text transform="translate(2370 1136) rotate(-50)">2017</text><text transform="translate(2428 1136) rotate(-50)">2021</text>
          </g>
          <text x="2155" y="1214" text-anchor="middle">Year</text>
          <text transform="translate(1773 1012) rotate(-90)" text-anchor="middle">°C</text>
        </svg>
        <div class="slider"><i></i><i></i></div>
        <div class="range"><span>1981</span><span>2024</span></div>
      </article>
      <article class="card next">
        <div class="cardhead">
          <div class="cardtext"><h3>European Union</h3></div>
          <div class="cardicons"><svg class="ic"><use href="#info"/></svg><svg class="ic"><use href="#download"/></svg><svg class="ic"><use href="#ratio"/></svg><svg class="ic"><use href="#close"/></svg></div>
        </div>
      </article>
    </aside>
  </main>
  <div class="shade"></div>
</div>
</body>
</html>
```
FILE: styles.css
```css
* { box-sizing: border-box; margin: 0; padding: 0; }
body { background: #05060c; font-family: Roboto, "Liberation Sans", sans-serif; color: #212121; overflow: hidden; }
.defs { position: absolute; width: 0; height: 0; }
.window { position: relative; width: 2540px; height: 1468px; border-top: 4px solid #35456f; display: flex; flex-direction: column; border-bottom-right-radius: 22px; overflow: hidden; }
.ic { width: 48px; height: 48px; flex: none; fill: currentColor; }
button { font: inherit; border: 0; background: #fff; display: flex; align-items: center; justify-content: center; }

.titlebar { height: 78px; flex: none; background: #000; box-shadow: inset 0 2px 0 #000, inset 0 4px 0 #4a4a4a; display: flex; align-items: center; justify-content: space-between; padding: 2px 34px 0 22px; border-top-right-radius: 22px; }
.lights { display: flex; gap: 16px; width: 400px; }
.lights i { width: 24px; height: 24px; border-radius: 50%; }
.red { background: #ed6a5e; }
.amber { background: #f5bf4f; }
.green { background: #61c654; }
.wintitle { color: #fff; font-size: 24.500px; font-weight: 500; letter-spacing: .4px; margin-right: 8px; }
.wintools { display: flex; justify-content: flex-end; align-items: center; gap: 54px; width: 400px; }

.appbar { height: 96px; flex: none; background: #7096c8; color: #fff; display: flex; align-items: center; padding: 0 64px 0 20px; box-shadow: 0 4px 8px -1px rgba(0,0,0,.2), 0 8px 10px rgba(0,0,0,.14), 0 2px 20px rgba(0,0,0,.12); position: relative; z-index: 3; }
.brand { font: 300 52px Lato, sans-serif; font-kerning: none; fill: #e9f2fc; }
.logo { flex: none; }
.finder { margin-left: 42px; width: 496px; height: 78px; border-radius: 8px; background: rgba(255,255,255,.15); display: flex; align-items: center; padding: 0 16px 0 24px; gap: 8px; }
.finder span { flex: 1; overflow: hidden; white-space: nowrap; font-size: 32px; letter-spacing: .3px; color: #b3c8e4; }
.actions { margin-left: auto; display: flex; align-items: center; gap: 48px; }
.aoi { display: flex; align-items: center; font-size: 28px; font-weight: 500; letter-spacing: .8px; white-space: nowrap; margin-right: -8px; }
.share { margin-left: -8px; }

.body { flex: 1; display: flex; min-height: 0; background: #fff; }
hr { border: 0; height: 2px; background: #e0e0e0; }
.left { width: 828px; height: 1276px; flex: none; overflow: hidden; padding: 0 32px 0 12px; background: #fff; }
.cutbox { height: 36px; border: 2px solid #c4c4c4; border-top: 0; border-radius: 0 0 8px 8px; }
.field { position: relative; border: 2px solid #c4c4c4; border-radius: 8px; display: flex; align-items: center; font-size: 32px; letter-spacing: .3px; }
.field label { position: absolute; top: -19px; left: 16px; padding: 0 11px; background: #fff; font-size: 24px; line-height: 34px; color: #666; letter-spacing: .22px; white-space: nowrap; }
.boundary { display: flex; align-items: center; margin-top: 20px; color: #757575; fill: #757575; }
.boundary .field { width: 584px; height: 112px; padding: 0 30px 0 26px; justify-content: space-between; color: #212121; }
.caret { border: 10px solid transparent; border-top-color: #757575; border-bottom: 0; }
.plus { margin-left: 26px; }
.dots { margin-left: 52px; }
.left hr { margin: 32px 0; }
.filter { display: flex; align-items: center; }
.filter .ic { margin: 16px 16px 0 0; }
.filterbox { flex: 1; height: 112px; border: 2px solid #c4c4c4; border-radius: 8px; padding: 0 26px 2px; display: flex; align-items: center; font-size: 32px; letter-spacing: .3px; color: #6b6b6b; }
.layers { list-style: none; margin-top: 14px; box-shadow: 0 2px 4px rgba(0,0,0,.25); }
.layers li { height: 96px; border-top: 2px solid #dcdcdc; display: flex; align-items: center; padding: 0 32px; gap: 16px; font-size: 32px; letter-spacing: .3px; }
.layers .arrow { margin-left: auto; color: #757575; }

.map { position: relative; width: 864px; flex: none; overflow: hidden; border: solid #d8dbe2; border-width: 0 2px; }
.world { display: block; }
.border path { fill: none; stroke: #7d8c82; stroke-width: 1.300px; vector-effect: non-scaling-stroke; }
.dash path { stroke-dasharray: 5 4; }
.equator { stroke: #7c6c84; stroke-width: 2px; stroke-dasharray: 11 5; }
.names text { font: 500 18px Roboto, sans-serif; text-anchor: middle; fill: #1c1f24; stroke: #fff; stroke-opacity: .9; stroke-width: 4px; stroke-linejoin: round; paint-order: stroke; }
.oceans text { font: 400 23.500px Roboto, sans-serif; letter-spacing: 3.200px; text-anchor: middle; fill: #315fbb; }
.eu path { fill: none; stroke: #000; stroke-width: 30; stroke-linejoin: round; stroke-linecap: round; }
.blob { stroke: #000; stroke-width: 24; stroke-linejoin: round; }
.isle path { stroke: #000; stroke-width: 9.500px; stroke-linecap: round; stroke-linejoin: round; fill: none; }
.tab { width: 80px; height: 140px; fill: #757575; }
.tab-left { position: absolute; left: 0; top: 528px; box-shadow: 0 2px 6px rgba(0,0,0,.35); }
.tab-left svg { margin-right: 4px; }
.tabs-right { position: absolute; right: 0; top: 458px; box-shadow: 0 2px 6px rgba(0,0,0,.35); }
.tabs-right .tab + .tab { border-top: 2px solid #e6e6e6; }
.powered { position: absolute; left: 190px; top: 1232px; }
.pw { font: 400 26px Roboto, sans-serif; fill: #000; }
.goog { font: 400 37px Lato, sans-serif; fill: #46597f; stroke: #46597f; stroke-width: 1.300px; }
.ee { font: 400 35px Lato, sans-serif; fill: #4a5d85; }

.right { flex: 1; height: 1276px; overflow: hidden; padding: 39px 32px 0 32px; background: #fff; }
h1 { font-size: 40px; font-weight: 500; line-height: 48px; letter-spacing: .3px; }
h2 { font-size: 28px; font-weight: 500; line-height: 40px; margin-top: 13px; letter-spacing: .75px; white-space: nowrap; }
.right hr { margin-top: 20px; }
.sel { margin-top: 5px; height: 100px; padding-left: 12px; }
.sel span { flex: 1; white-space: nowrap; letter-spacing: .15px; }
.second { margin-top: 32px; }
.bar { width: 2px; height: 40px; background: #ccc; }
.rs { width: 44px; height: 44px; margin: 0 26px 0 14px; fill: #666; flex: none; stroke: #666; stroke-width: .5; }
.buttons { display: flex; justify-content: space-between; margin: 16px 4px 0; }
.process { width: 159px; height: 62px; margin-top: 1px; padding-bottom: 3px; border-radius: 8px; background: #7096c8; color: #fff; font-size: 27px; font-weight: 500; letter-spacing: -.1px; box-shadow: 0 3px 6px rgba(0,0,0,.35); }
.sort { width: 128px; height: 64px; border: 2px solid #212121; border-radius: 8px; fill: #212121; }
.card { margin: 19px 4px 0; height: 710px; border-radius: 8px; background: #fff; box-shadow: 0 3px 2px -1px rgba(0,0,0,.3), 0 1px 5px rgba(0,0,0,.18); padding-top: 16px; }
.cardhead { display: flex; padding: 0 47px 0 16px; height: 172px; }
.cardtext { flex: 1; }
.cardicons { display: flex; gap: 48px; margin-top: 25px; color: #757575; }
h3 { font-size: 28px; font-weight: 500; line-height: 44px; letter-spacing: .25px; }
.card p { font-size: 24px; line-height: 42px; letter-spacing: .8px; white-space: nowrap; }
.chart { display: block; }
.chart text { font: 24px "Liberation Sans", Arial, sans-serif; fill: #666; }
.grid { fill: none; stroke: rgba(0,0,0,.12); stroke-width: 2px; }
.meanline { fill: none; stroke: #7096c8; stroke-opacity: .65; stroke-width: 3px; stroke-linejoin: round; marker: url(#dot); }
.slider { height: 12px; background: #7096c8; margin: 36px 71px 0 64px; display: flex; justify-content: space-between; align-items: center; }
.slider i { width: 40px; height: 40px; border-radius: 50%; background: #7096c8; box-shadow: 0 2px 4px rgba(0,0,0,.3); margin: 0 -20px; }
.range { display: flex; justify-content: space-between; margin: 25px 39px 0 32px; font-size: 28px; line-height: 36px; letter-spacing: .3px; }
.next { margin-top: 16px; }
.shade { position: absolute; left: 0; right: 0; bottom: 0; height: 80px; background: linear-gradient(rgba(0,0,0,0), rgba(0,0,0,.12)); -webkit-mask-image: linear-gradient(90deg, transparent, #000 120px, #000 2380px, transparent 2530px); mask-image: linear-gradient(90deg, transparent, #000 120px, #000 2380px, transparent 2530px); z-index: 4; }
```
